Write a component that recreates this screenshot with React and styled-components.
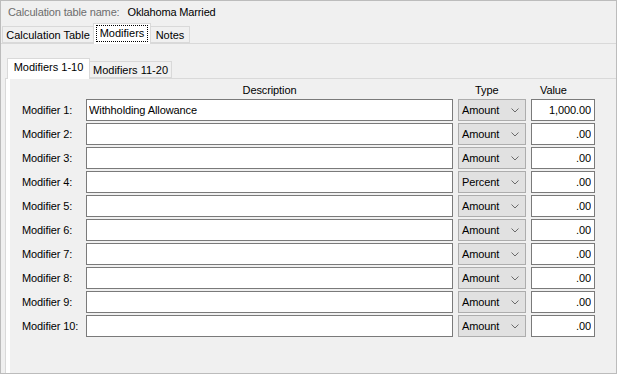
import * as React from "react";
import styled, { createGlobalStyle } from "styled-components";

const GlobalStyle = createGlobalStyle`
  html, body {
    margin: 0;
    padding: 0;
    background: #f0f0f0;
  }
  body {
    font-family: "Liberation Sans", Arial, sans-serif;
    font-size: 11px;
    color: #000;
  }
  * { box-sizing: border-box; }
`;

const Window = styled.div`
  width: 617px;
  height: 374px;
  border: 1px solid #bcbcbc;
  background: #f0f0f0;
  overflow: hidden;
  display: flex;
  flex-direction: column;
`;

const NameRow = styled.div`
  height: 22px;
  display: flex;
  align-items: center;
  padding-left: 7px;
  gap: 8px;
  letter-spacing: -0.15px;
`;

const NameLabel = styled.span`
  color: #6d6d6d;
`;

const TabStrip = styled.div`
  display: flex;
  align-items: flex-end;
  height: 20px;
  padding-left: ${(p) => p.$indent}px;
  position: relative;
  z-index: 1;
`;

const Tab = styled.div`
  height: ${(p) => (p.$active ? 21 : 17)}px;
  margin-bottom: ${(p) => (p.$active ? -1 : 0)}px;
  width: ${(p) => p.$width}px;
  border: 1px solid #d9d9d9;
  border-bottom: ${(p) => (p.$active ? "none" : "1px solid #d9d9d9")};
  background: ${(p) => (p.$active ? "#ffffff" : "#f0f0f0")};
  display: flex;
  align-items: ${(p) => (p.$active ? "flex-start" : "center")};
  justify-content: center;
  padding-top: ${(p) => (p.$active ? 2 : 0)}px;
  white-space: nowrap;
  & + & {
    margin-left: -1px;
  }
`;

const FocusLabel = styled.span`
  outline: 1px dotted #000;
  padding: 1px 3px;
  line-height: 13px;
`;

const OuterPane = styled.div`
  flex: 1;
  border-top: 1px solid #d9d9d9;
  padding: 14px 0 0 4px;
  display: flex;
  flex-direction: column;
`;

const InnerPane = styled.div`
  flex: 1;
  border-top: 1px solid #d9d9d9;
  border-left: 1px solid #d9d9d9;
  background: #ffffff;
  padding-left: 3px;
  display: flex;
`;

const Panel = styled.div`
  flex: 1;
  background: #f0f0f0;
  margin-left: 1px;
  padding-left: 12px;
`;

const Grid = styled.div`
  display: grid;
  grid-template-columns: 59px 367px 68px 64px;
  grid-template-rows: 18px;
  grid-auto-rows: 22px;
  column-gap: 5px;
  row-gap: 2px;
  letter-spacing: -0.1px;
`;

const Header = styled.div`
  display: flex;
  align-items: flex-end;
  justify-content: ${(p) => (p.$center ? "center" : "flex-start")};
  padding-left: ${(p) => p.$pad || 0}px;
  line-height: 13px;
`;

const Label = styled.div`
  display: flex;
  align-items: center;
  white-space: nowrap;
`;

const TextBox = styled.input`
  width: 100%;
  height: 22px;
  margin: 0;
  border: 1px solid #7a7a7a;
  background: #ffffff;
  font: inherit;
  letter-spacing: -0.1px;
  color: #000;
  padding: 0 ${(p) => (p.$right ? 3 : 2)}px 0 2px;
  text-align: ${(p) => (p.$right ? "right" : "left")};
  outline: none;
`;

const Select = styled.div`
  height: 22px;
  border: 1px solid #adadad;
  background: #e1e1e1;
  display: flex;
  align-items: center;
  justify-content: space-between;
  padding: 0 6px 0 3px;
`;

const Chevron = () => (
  <svg width="8" height="5" viewBox="0 0 8 5">
    <polyline points="0.5,0.5 4,4 7.5,0.5" fill="none" stroke="#6a6a6a" strokeWidth="1" />
  </svg>
);

const rows = [
  { desc: "Withholding Allowance", type: "Amount", value: "1,000.00" },
  { desc: "", type: "Amount", value: ".00" },
  { desc: "", type: "Amount", value: ".00" },
  { desc: "", type: "Percent", value: ".00" },
  { desc: "", type: "Amount", value: ".00" },
  { desc: "", type: "Amount", value: ".00" },
  { desc: "", type: "Amount", value: ".00" },
  { desc: "", type: "Amount", value: ".00" },
  { desc: "", type: "Amount", value: ".00" },
  { desc: "", type: "Amount", value: ".00" },
];

export default function App() {
  return (
    <>
      <GlobalStyle />
      <Window>
        <NameRow>
          <NameLabel>Calculation table name:</NameLabel>
          <span>Oklahoma Married</span>
        </NameRow>
        <TabStrip $indent={1}>
          <Tab $width={92}>Calculation Table</Tab>
          <Tab $width={58} $active>
            <FocusLabel>Modifiers</FocusLabel>
          </Tab>
          <Tab $width={40}>Notes</Tab>
        </TabStrip>
        <OuterPane>
          <TabStrip $indent={2}>
            <Tab $width={83} $active>
              Modifiers 1-10
            </Tab>
            <Tab $width={83}>Modifiers 11-20</Tab>
          </TabStrip>
          <InnerPane>
            <Panel>
              <Grid>
                <span />
                <Header $center>Description</Header>
                <Header $pad={17}>Type</Header>
                <Header $pad={9}>Value</Header>
                {rows.map((r, i) => (
                  <React.Fragment key={i}>
                    <Label>Modifier {i + 1}:</Label>
                    <TextBox readOnly defaultValue={r.desc} />
                    <Select>
                      <span>{r.type}</span>
                      <Chevron />
                    </Select>
                    <TextBox readOnly $right defaultValue={r.value} />
                  </React.Fragment>
                ))}
              </Grid>
            </Panel>
          </InnerPane>
        </OuterPane>
      </Window>
    </>
  );
}
